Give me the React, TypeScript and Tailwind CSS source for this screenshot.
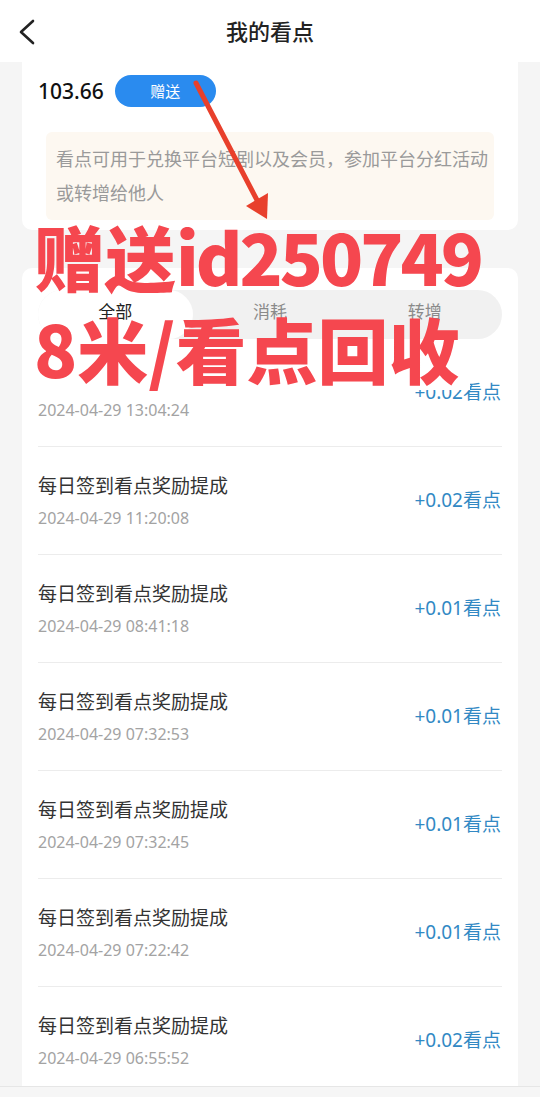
import React from "react";

const records = [
  { title: "每日签到看点奖励提成", time: "2024-04-29 13:04:24", amount: "+0.02看点" },
  { title: "每日签到看点奖励提成", time: "2024-04-29 11:20:08", amount: "+0.02看点" },
  { title: "每日签到看点奖励提成", time: "2024-04-29 08:41:18", amount: "+0.01看点" },
  { title: "每日签到看点奖励提成", time: "2024-04-29 07:32:53", amount: "+0.01看点" },
  { title: "每日签到看点奖励提成", time: "2024-04-29 07:32:45", amount: "+0.01看点" },
  { title: "每日签到看点奖励提成", time: "2024-04-29 07:22:42", amount: "+0.01看点" },
  { title: "每日签到看点奖励提成", time: "2024-04-29 06:55:52", amount: "+0.02看点" },
];

const tabs = ["全部", "消耗", "转增"];

export default function App() {
  return (
    <div
      className="relative h-[1097px] w-[540px] overflow-hidden bg-[#f5f5f5] flex flex-col"
      style={{ fontFamily: '"Noto Sans", "Noto Sans CJK SC", sans-serif' }}
    >
      {/* header */}
      <div className="h-[62px] shrink-0 bg-white flex items-center relative">
        <svg className="absolute left-[16px] top-[19px]" width="22" height="26" viewBox="0 0 22 26" fill="none">
          <path d="M17 2 L5 13 L17 24" stroke="#222" strokeWidth="2.6" strokeLinecap="round" strokeLinejoin="round" />
        </svg>
        <div className="w-full text-center text-[22px] font-medium text-[#222]">我的看点</div>
      </div>

      <div className="flex-1 overflow-hidden flex flex-col">
        {/* balance card */}
        <div className="mx-[22px] bg-white rounded-b-[10px] pt-[13px] pb-[10px] px-[16px]">
          <div className="flex items-center gap-[11px]">
            <span className="text-[21px] font-medium text-[#111] leading-none">103.66</span>
            <span className="h-[32px] w-[101px] rounded-full bg-[#2a8bef] text-white text-[15px] flex items-center justify-center">
              赠送
            </span>
          </div>
          <div className="mt-[25px] mx-[8px] bg-[#fdf8f1] rounded-[6px] pl-[10px] pr-[4px] py-[10px] text-[18px] leading-[34px] text-[#9a9a9a] whitespace-nowrap">
            看点可用于兑换平台短剧以及会员，参加平台分红活动
            <br />
            或转增给他人
          </div>
        </div>

        {/* records card */}
        <div className="mt-[38px] mx-[22px] bg-white rounded-t-[10px] px-[16px] pt-[22px] flex-1">
          <div className="flex h-[49px] rounded-full bg-[#f1f1f1]">
            {tabs.map((t, i) => (
              <div
                key={t}
                className={
                  i === 0
                    ? "flex-1 rounded-full bg-white flex items-center justify-center text-[17px] text-[#222] pb-[6px]"
                    : "flex-1 flex items-center justify-center text-[17px] text-[#8a8a8a] pb-[6px]"
                }
              >
                {t}
              </div>
            ))}
          </div>
          <div className="flex flex-col">
            {records.map((r, i) => (
              <div key={i} className="h-[108px] shrink-0 flex items-center justify-between border-b border-[#ececec]">
                <div className="flex flex-col gap-[8px]">
                  <span className="text-[19px] leading-[26px] text-[#333]">{r.title}</span>
                  <span className="text-[16px] leading-[22px] text-[#a3a3a3]">{r.time}</span>
                </div>
                <span className="text-[19px] text-[#3289c4] pr-[1px]">{r.amount}</span>
              </div>
            ))}
          </div>
        </div>
      </div>
      <div className="h-[11px] shrink-0 bg-[#f6f6f6] border-t border-[#e6e6e6]" />

      {/* promo overlay */}
      <div className="absolute left-[38px] top-[343px] w-[432px] h-[47px] bg-white" />
      <div
        className="absolute left-[34px] top-[209px] text-[71px] leading-[92px] font-black text-[#f5474f] whitespace-nowrap"
        style={{ fontFamily: '"Noto Sans CJK SC", sans-serif' }}
      >
        <div>
          赠送<span className="tracking-[-3px]">id250749</span>
        </div>
        <div>8米/看点回收</div>
      </div>
      <svg className="absolute left-0 top-0" width="540" height="260" viewBox="0 0 540 260" fill="none">
        <path d="M196 83 L258 202" stroke="#e8402c" strokeWidth="5" strokeLinecap="round" />
        <path d="M267 219 L246 206 L268 193 Z" fill="#e8402c" />
      </svg>
    </div>
  );
}
